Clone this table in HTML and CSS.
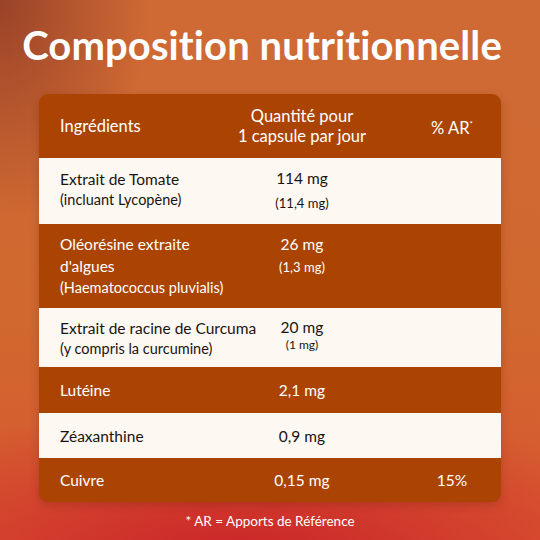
FILE: index.html
```html
<!DOCTYPE html>
<html lang="fr">
<head>
<meta charset="utf-8">
<link rel="stylesheet" href="styles.css">
</head>
<body>
<main class="page">
  <h1 class="title">Composition nutritionnelle</h1>
  <section class="table">
    <div class="row head">
      <div class="c1">Ingrédients</div>
      <div class="c2">Quantité pour<br>1 capsule par jour</div>
      <div class="c3">% AR<sup>*</sup></div>
    </div>
    <div class="row light r1">
      <div class="c1">Extrait de Tomate<br><span class="sub">(incluant Lycopène)</span></div>
      <div class="c2 q1">114 mg<br><span class="sub">(11,4 mg)</span></div>
      <div class="c3"></div>
    </div>
    <div class="row dark r2">
      <div class="c1">Oléorésine extraite<br>d'algues<br><span class="sub">(Haematococcus pluvialis)</span></div>
      <div class="c2">26 mg<br><span class="sub">(1,3 mg)</span></div>
      <div class="c3"></div>
    </div>
    <div class="row light r3">
      <div class="c1">Extrait de racine de Curcuma<br><span class="sub">(y compris la curcumine)</span></div>
      <div class="c2 q3">20 mg<br><span class="sub small">(1 mg)</span></div>
      <div class="c3"></div>
    </div>
    <div class="row dark r4 single">
      <div class="c1">Lutéine</div>
      <div class="c2">2,1 mg</div>
      <div class="c3"></div>
    </div>
    <div class="row light r5 single">
      <div class="c1">Zéaxanthine</div>
      <div class="c2">0,9 mg</div>
      <div class="c3"></div>
    </div>
    <div class="row dark r6 single">
      <div class="c1">Cuivre</div>
      <div class="c2">0,15 mg</div>
      <div class="c3">15%</div>
    </div>
  </section>
  <p class="note">* AR = Apports de Référence</p>
</main>
</body>
</html>
```
FILE: styles.css
```css
* { box-sizing: border-box; }
html, body { margin: 0; padding: 0; }
body {
  width: 540px;
  height: 540px;
  overflow: hidden;
  font-family: Lato, "Open Sans", sans-serif;
}
.page {
  width: 540px;
  height: 540px;
  display: flex;
  flex-direction: column;
  align-items: center;
  background:
    radial-gradient(ellipse 150px 220px at 0 0, rgba(145,60,38,0.85), rgba(145,60,38,0) 100%),
    radial-gradient(ellipse 420px 160px at 240px 560px, rgba(200,30,40,0.9), rgba(200,30,40,0) 100%),
    linear-gradient(180deg, #cf6a35 0%, #d0682f 60%, #da5530 100%);
}
.title {
  margin: 21px 0 0;
  padding-right: 16px;
  color: #fff;
  font-family: Lato, sans-serif;
  font-weight: 700;
  font-size: 40px;
  line-height: 48px;
  letter-spacing: 0.1px;
  height: 73px;
}
.table {
  width: 462px;
  border-radius: 9px;
  overflow: hidden;
  background: #ab4403;
  box-shadow: 0 3px 8px rgba(90,30,10,0.25);
}
.row {
  display: grid;
  grid-template-columns: 175px 134px 1fr;
  padding-left: 21px;
  align-items: start;
  font-size: 15.5px;
  line-height: 20px;
  white-space: nowrap;
}
.row .c2 { text-align: center; }
.row .c3 { text-align: center; padding-left: 34px; }
.dark { background: #ab4403; color: #fff; }
.light { background: #fdf8f2; color: #1a1410; }
.head {
  height: 64px;
  color: #fff;
  font-size: 16.5px;
  line-height: 20px;
  align-items: center;
}
.head sup { font-size: 8px; vertical-align: 7px; }
.sub { font-size: 14.5px; }
.c2 .sub { font-size: 13px; }
.c2 .small { font-size: 12px; }
.r1 { height: 66px; padding-top: 11px; }
.r1 .q1 { line-height: 24px; margin-top: -3px; }
.r2 { height: 84px; padding-top: 10px; line-height: 21.5px; }
.r3 { height: 59px; padding-top: 10px; }
.r3 .q3 { line-height: 16px; padding-top: 1px; }
.single { align-items: center; }
.r4 { height: 46px; }
.r5 { height: 45px; }
.r6 { height: 44px; }
.note {
  margin: 11px 0 0;
  color: #fff;
  font-size: 13.5px;
  line-height: 16px;
}
```
